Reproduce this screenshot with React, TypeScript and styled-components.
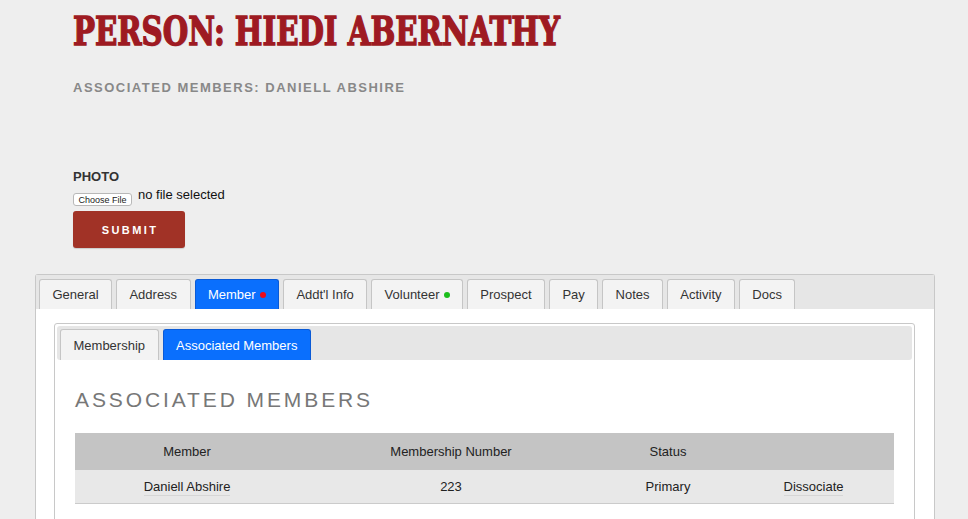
import React from "react";
import styled, { createGlobalStyle, css } from "styled-components";

const GlobalStyle = createGlobalStyle`
  html, body {
    margin: 0;
    padding: 0;
    background: #eeeeee;
    font-family: "Liberation Sans", Arial, Helvetica, sans-serif;
    color: #333;
  }
`;

const Page = styled.div`
  padding-top: 11px;
  min-height: 519px;
  box-sizing: border-box;
`;

const Header = styled.header`
  margin-left: 73px;
`;

/* heavy slab-style headline: bold serif thickened with a stroke, narrowed */
const Title = styled.h1`
  margin: 0;
  display: inline-block;
  white-space: nowrap;
  font-family: "DejaVu Serif", "Liberation Serif", serif;
  font-weight: bold;
  font-size: 39px;
  line-height: 40px;
  color: #9e1a22;
  -webkit-text-stroke: 1.5px #9e1a22;
  text-shadow: 1px 1px 0 #d6d6d6;
  transform: scaleX(0.75);
  transform-origin: left center;
`;

const Subtitle = styled.h2`
  margin: 29px 0 0;
  font-size: 13px;
  line-height: 16px;
  font-weight: bold;
  letter-spacing: 1.5px;
  color: #888;
`;

const PhotoForm = styled.form`
  margin-top: 73px;
  display: flex;
  flex-direction: column;
  align-items: flex-start;
`;

const FieldLabel = styled.label`
  font-size: 13px;
  font-weight: bold;
  line-height: 16px;
  color: #333;
`;

const FileRow = styled.div`
  display: flex;
  align-items: flex-start;
  gap: 6px;
  margin-top: 2px;
`;

const FileButton = styled.span`
  margin-top: 6px;
  height: 13px;
  width: 59px;
  box-sizing: border-box;
  display: flex;
  align-items: center;
  justify-content: center;
  font-size: 9px;
  color: #222;
  background: #fff;
  border: 1px solid #b8b8b8;
  border-radius: 3px;
`;

const FileName = styled.span`
  font-size: 13px;
  line-height: 16px;
  color: #111;
`;

const SubmitButton = styled.button`
  margin-top: 5px;
  width: 112px;
  height: 37px;
  border: none;
  border-radius: 3px;
  background: #a13226;
  color: #fff;
  font-family: "Liberation Sans", Arial, sans-serif;
  font-size: 11px;
  font-weight: bold;
  letter-spacing: 2.4px;
  padding: 0 0 0 2px;
  box-shadow: 0 1px 1px rgba(0, 0, 0, 0.15);
`;

const Panel = styled.section`
  margin: 26px 0 0 35px;
  width: 900px;
  box-sizing: border-box;
  border: 1px solid #c8c8c8;
  border-bottom: none;
  background: #fff;
  border-radius: 3px 3px 0 0;
`;

const TabBar = styled.nav<{ $inner?: boolean }>`
  display: flex;
  gap: 4px;
  background: #e6e6e6;
  ${(p) =>
    p.$inner
      ? css`
          padding: 3px 3px 0;
          border-radius: 3px;
        `
      : css`
          padding: 4px 3px 0;
        `}
`;

const Tab = styled.div<{ $active?: boolean; $inner?: boolean }>`
  height: ${(p) => (p.$inner ? 31 : 30)}px;
  box-sizing: border-box;
  padding: 0 ${(p) => (p.$inner ? 12.5 : 12.4)}px;
  display: flex;
  align-items: center;
  gap: 4px;
  font-size: 13px;
  border: 1px solid #c5c5c5;
  border-bottom: none;
  border-radius: 3px 3px 0 0;
  background: #f3f3f3;
  color: #333;
  ${(p) =>
    p.$active &&
    css`
      background: #0a6ffd;
      border-color: #0a5ad6;
      color: #fff;
    `}
`;

const Dot = styled.span<{ $color: string }>`
  flex: none;
  width: 6px;
  height: 6px;
  border-radius: 50%;
  background: ${(p) => p.$color};
  margin-top: 1px;
`;

const PanelBody = styled.div`
  padding: 14px 19px 40px 18px;
`;

const InnerPanel = styled.div`
  border: 1px solid #c8c8c8;
  border-radius: 3px;
  padding: 2px;
`;

const InnerContent = styled.div`
  padding: 0 18px 20px;
`;

const SectionHeading = styled.h3`
  margin: 28px 0 0;
  font-size: 21px;
  line-height: 24px;
  font-weight: normal;
  letter-spacing: 2.9px;
  color: #777;
`;

const Table = styled.table`
  margin-top: 21px;
  width: 100%;
  border-collapse: collapse;
  font-size: 13px;
  color: #222;
`;

const HeadCell = styled.th<{ $w: number }>`
  width: ${(p) => p.$w}px;
  height: 37px;
  padding: 0;
  font-weight: normal;
  background: #c4c4c4;
  text-align: center;
`;

const Row = styled.tr`
  background: #e8e8e8;
  border-bottom: 1px solid #cbcbcb;
`;

const Cell = styled.td`
  height: 33px;
  padding: 0;
  text-align: center;
`;

const LinkText = styled.span`
  padding-bottom: 1px;
  border-bottom: 1px solid #d6d6d6;
`;

const mainTabs = [
  { label: "General" },
  { label: "Address" },
  { label: "Member", active: true, dot: "#ee0a1a" },
  { label: "Addt'l Info" },
  { label: "Volunteer", dot: "#1cbe1c" },
  { label: "Prospect" },
  { label: "Pay" },
  { label: "Notes" },
  { label: "Activity" },
  { label: "Docs" },
];

export default function App() {
  return (
    <>
      <GlobalStyle />
      <Page>
        <Header>
          <Title>PERSON: HIEDI ABERNATHY</Title>
          <Subtitle>ASSOCIATED MEMBERS: DANIELL ABSHIRE</Subtitle>
          <PhotoForm onSubmit={(e) => e.preventDefault()}>
            <FieldLabel>PHOTO</FieldLabel>
            <FileRow>
              <FileButton>Choose File</FileButton>
              <FileName>no file selected</FileName>
            </FileRow>
            <SubmitButton type="submit">SUBMIT</SubmitButton>
          </PhotoForm>
        </Header>

        <Panel>
          <TabBar>
            {mainTabs.map((t) => (
              <Tab key={t.label} $active={t.active}>
                {t.label}
                {t.dot && <Dot $color={t.dot} />}
              </Tab>
            ))}
          </TabBar>
          <PanelBody>
            <InnerPanel>
              <TabBar $inner>
                <Tab $inner>Membership</Tab>
                <Tab $inner $active>
                  Associated Members
                </Tab>
              </TabBar>
              <InnerContent>
                <SectionHeading>ASSOCIATED MEMBERS</SectionHeading>
                <Table>
                  <thead>
                    <tr>
                      <HeadCell $w={224}>Member</HeadCell>
                      <HeadCell $w={304}>Membership Number</HeadCell>
                      <HeadCell $w={130}>Status</HeadCell>
                      <HeadCell $w={161}></HeadCell>
                    </tr>
                  </thead>
                  <tbody>
                    <Row>
                      <Cell>
                        <LinkText>Daniell Abshire</LinkText>
                      </Cell>
                      <Cell>223</Cell>
                      <Cell>Primary</Cell>
                      <Cell>
                        <LinkText>Dissociate</LinkText>
                      </Cell>
                    </Row>
                  </tbody>
                </Table>
              </InnerContent>
            </InnerPanel>
          </PanelBody>
        </Panel>
      </Page>
    </>
  );
}
